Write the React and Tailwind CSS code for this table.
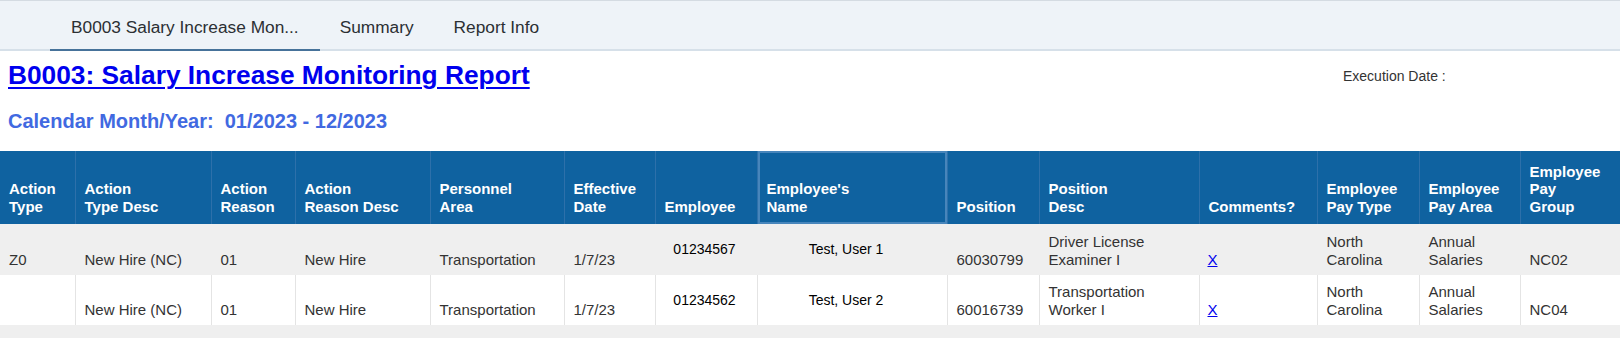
import React from "react";

const columns = [
  { col: "w-[75px]", head: ["Action", "Type"] },
  { col: "w-[136px]", head: ["Action", "Type Desc"] },
  { col: "w-[84px]", head: ["Action", "Reason"] },
  { col: "w-[135px]", head: ["Action", "Reason Desc"] },
  { col: "w-[134px]", head: ["Personnel", "Area"] },
  { col: "w-[91px]", head: ["Effective", "Date"] },
  { col: "w-[102px]", head: ["Employee"] },
  { col: "w-[190px]", head: ["Employee's", "Name"], focus: true },
  { col: "w-[92px]", head: ["Position"] },
  { col: "w-[160px]", head: ["Position", "Desc"] },
  { col: "w-[118px]", head: ["Comments?"] },
  { col: "w-[102px]", head: ["Employee", "Pay Type"] },
  { col: "w-[101px]", head: ["Employee", "Pay Area"] },
  { col: "w-[100px]", head: ["Employee", "Pay", "Group"] },
];

const rows = [
  {
    height: "h-[51px]",
    bg: "bg-[#efefef]",
    line: "border-[#efefef]",
    cells: [
      ["Z0"],
      ["New Hire (NC)"],
      ["01"],
      ["New Hire"],
      ["Transportation"],
      ["1/7/23"],
      "01234567",
      "Test, User 1",
      ["60030799"],
      ["Driver License", "Examiner I"],
      "X",
      ["North", "Carolina"],
      ["Annual", "Salaries"],
      ["NC02"],
    ],
  },
  {
    height: "h-[50px]",
    bg: "bg-white",
    line: "border-[#e4e4e4]",
    cells: [
      [""],
      ["New Hire (NC)"],
      ["01"],
      ["New Hire"],
      ["Transportation"],
      ["1/7/23"],
      "01234562",
      "Test, User 2",
      ["60016739"],
      ["Transportation", "Worker I"],
      "X",
      ["North", "Carolina"],
      ["Annual", "Salaries"],
      ["NC04"],
    ],
  },
];

function Lines({ lines }) {
  return lines.map((text, i) => (
    <div key={i} className="whitespace-nowrap">
      {text || "\u00a0"}
    </div>
  ));
}

function BodyCell({ value, index, line }) {
  const border = index === 0 ? "" : `border-l ${line}`;

  // Employee number and name sit centred in the middle of the row
  if (index === 6 || index === 7) {
    const pad = index === 6 ? "pl-[9px] pr-[12px]" : "pl-[9px] pr-[21px]";
    return (
      <td
        className={`${border} ${pad} align-middle text-center text-[14px] leading-[17px] text-black whitespace-nowrap`}
      >
        {value}
      </td>
    );
  }

  if (index === 10) {
    return (
      <td className={`${border} pl-[8px] pb-[7px] align-bottom`}>
        <a href="#" className="text-[#0000ee] underline">
          {value}
        </a>
      </td>
    );
  }

  return (
    <td className={`${border} pl-[9px] pb-[7px] align-bottom`}>
      <Lines lines={value} />
    </td>
  );
}

export default function App() {
  return (
    <div className="min-h-screen bg-white font-['Liberation_Sans',Arial,sans-serif] text-[#333333]">
      {/* Tab strip */}
      <div className="flex h-[51px] border-t border-b-2 border-t-[#d4dbe2] border-b-[#d6e0e9] bg-[#eef3f8] pl-[50px]">
        <button
          type="button"
          className="-mb-[2px] border-b-2 border-[#46729a] px-[21px] pt-[5px] text-[17.3px] text-[#2b2f33]"
        >
          B0003 Salary Increase Mon...
        </button>
        <button type="button" className="px-[20px] pt-[5px] text-[17.3px] text-[#2b2f33]">
          Summary
        </button>
        <button type="button" className="px-[20px] pt-[5px] text-[17.3px] text-[#2b2f33]">
          Report Info
        </button>
      </div>

      {/* Report heading */}
      <div className="mt-[9px] flex items-start">
        <h1 className="flex-1 pl-[8px] text-[26.3px] font-bold leading-[30px]">
          <a href="#" className="text-[#0000ee] underline decoration-2 underline-offset-[3px]">
            B0003: Salary Increase Monitoring Report
          </a>
        </h1>
        <div className="w-[277px] pt-[8px] text-[14px] leading-[17px] text-[#333333]">
          Execution Date :
        </div>
      </div>

      <div className="mt-[19px] pl-[8px] text-[20px] font-bold leading-[24px] text-[#4169e1]">
        Calendar Month/Year:{"\u00a0"} 01/2023 - 12/2023
      </div>

      {/* Results table */}
      <div className="mt-[18px] bg-[#efefef] pb-[16px]">
        <table className="w-full table-fixed border-collapse text-[15px] leading-[17.5px]">
          <colgroup>
            {columns.map((c, i) => (
              <col key={i} className={c.col} />
            ))}
          </colgroup>
          <thead>
            <tr className="h-[73px] bg-[#0f62a0]">
              {columns.map((c, i) => (
                <th
                  key={i}
                  className={`${i === 0 ? "" : "border-l border-[#2d70aa]"} ${
                    c.focus ? "shadow-[inset_0_0_0_2px_#4785bb]" : ""
                  } pl-[9px] pb-[9px] text-left align-bottom font-bold text-white`}
                >
                  <Lines lines={c.head} />
                </th>
              ))}
            </tr>
          </thead>
          <tbody>
            {rows.map((r, ri) => (
              <tr key={ri} className={`${r.height} ${r.bg}`}>
                {r.cells.map((v, ci) => (
                  <BodyCell key={ci} value={v} index={ci} line={r.line} />
                ))}
              </tr>
            ))}
          </tbody>
        </table>
      </div>
    </div>
  );
}
